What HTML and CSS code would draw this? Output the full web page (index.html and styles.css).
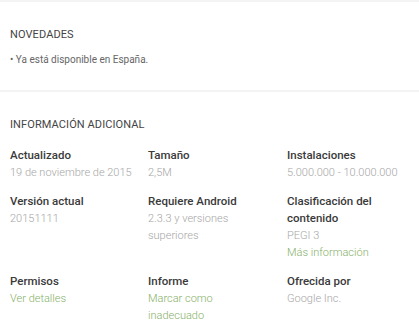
FILE: index.html
```html
<!DOCTYPE html>
<html lang="es">
<head>
  <meta charset="UTF-8">
  <meta name="viewport" content="width=device-width, initial-scale=1.0">
  <title>Información adicional</title>
  <link rel="stylesheet" href="styles.css">
</head>
<body>
  <div class="section news">
    <h2 class="heading">NOVEDADES</h2>
    <p class="recent">• Ya está disponible en España.</p>
  </div>
  <div class="section info">
    <h2 class="heading">INFORMACIÓN ADICIONAL</h2>
    <div class="grid">
      <div class="meta">
        <div class="title">Actualizado</div>
        <div class="content">19 de noviembre de 2015</div>
      </div>
      <div class="meta">
        <div class="title">Tamaño</div>
        <div class="content">2,5M</div>
      </div>
      <div class="meta">
        <div class="title">Instalaciones</div>
        <div class="content">5.000.000 - 10.000.000</div>
      </div>
      <div class="meta">
        <div class="title">Versión actual</div>
        <div class="content">20151111</div>
      </div>
      <div class="meta">
        <div class="title">Requiere Android</div>
        <div class="content">2.3.3 y versiones superiores</div>
      </div>
      <div class="meta">
        <div class="title">Clasificación del contenido</div>
        <div class="content">PEGI 3</div>
        <a class="link" href="#">Más información</a>
      </div>
      <div class="meta">
        <div class="title">Permisos</div>
        <a class="link" href="#">Ver detalles</a>
      </div>
      <div class="meta">
        <div class="title">Informe</div>
        <a class="link report" href="#">Marcar como inadecuado</a>
      </div>
      <div class="meta">
        <div class="title">Ofrecida por</div>
        <div class="content">Google Inc.</div>
      </div>
    </div>
  </div>
</body>
</html>
```

FILE: styles.css
```css
body {
  margin: 0;
  background: #fff;
  font-family: Roboto, Arial, sans-serif;
  font-size: 11px;
  line-height: 17px;
  color: #333;
}
.section {
  padding: 0 10px;
}
.news {
  border-top: 2px solid #f3f3f3;
  border-bottom: 2px solid #f3f3f3;
  padding-top: 24px;
  height: 64px;
}
.heading {
  margin: 0;
  font-size: 11px;
  font-weight: 400;
  color: #444;
  letter-spacing: 0.1px;
}
.recent {
  margin: 8px 0 0;
  color: #666;
  font-size: 10px;
}
.info {
  padding-top: 24px;
}
.grid {
  display: grid;
  grid-template-columns: 138px 139px 130px;
  row-gap: 12px;
  margin-top: 14px;
}
.meta {
  display: flex;
  flex-direction: column;
  padding-right: 10px;
}
.title {
  font-size: 11.5px;
  font-weight: 500;
  color: #3a3a3a;
}
.content {
  color: #a6a6a6;
  font-weight: 300;
}
.link {
  color: #86b068;
  font-weight: 300;
  text-decoration: none;
}
.report {
  max-width: 100px;
}
```
